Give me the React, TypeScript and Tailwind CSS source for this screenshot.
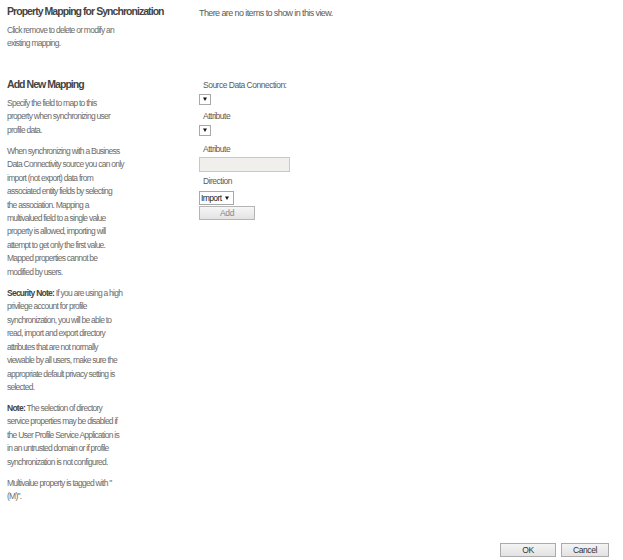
const INTRO = ["Specify the field to map to this", "property when synchronizing user", "profile data."];

const BDC = [
  "When synchronizing with a Business",
  "Data Connectivity source you can only",
  "import (not export) data from",
  "associated entity fields by selecting",
  "the association. Mapping a",
  "multivalued field to a single value",
  "property is allowed, importing will",
  "attempt to get only the first value.",
  "Mapped properties cannot be",
  "modified by users.",
];

const SECURITY = [
  "If you are using a high",
  "privilege account for profile",
  "synchronization, you will be able to",
  "read, import and export directory",
  "attributes that are not normally",
  "viewable by all users, make sure the",
  "appropriate default privacy setting is",
  "selected.",
];

const NOTE = [
  "The selection of directory",
  "service properties may be disabled if",
  "the User Profile Service Application is",
  "in an untrusted domain or if profile",
  "synchronization is not configured.",
];

const MULTI = ['Multivalue property is tagged with "', '(M)".'];

const Arrow = () => (
  <svg width="4" height="4" viewBox="0 0 4 4" className="block">
    <path d="M0 0.5h4L2 4z" fill="#111" />
  </svg>
);

const Lines = ({ lines, lead }: { lines: string[]; lead?: string }) => (
  <div className="mb-[7.5px]">
    {lines.map((l, i) => (
      <div key={i} className="whitespace-nowrap">
        {i === 0 && lead && <span className="font-bold text-[#444]">{lead} </span>}
        {l}
      </div>
    ))}
  </div>
);

const Label = ({ children, className = "" }: { children: React.ReactNode; className?: string }) => (
  <div className={`pl-[4px] h-[13px] leading-[13px] text-[8.5px] tracking-[-0.5px] text-[#5a5a5a] whitespace-nowrap ${className}`}>
    {children}
  </div>
);

const SmallSelect = () => (
  <div className="w-[12px] h-[11px] border border-[#a8a8a8] bg-white flex items-center justify-center">
    <Arrow />
  </div>
);

export default function App() {
  return (
    <div className="w-[623px] h-[560px] bg-white flex flex-col font-['Liberation_Sans',Arial,sans-serif]">
      {/* Property mapping */}
      <div className="flex pt-[4px]">
        <div className="w-[199px] pl-[7px] shrink-0">
          <h2 className="text-[10.5px] leading-[14px] font-bold tracking-[-0.95px] text-[#444] whitespace-nowrap">
            Property Mapping for Synchronization
          </h2>
          <div className="mt-[6px] text-[8.5px] leading-[13.45px] tracking-[-0.75px] text-[#6b6b6b]">
            <div>Click remove to delete or modify an</div>
            <div>existing mapping.</div>
          </div>
        </div>
        <div className="pt-[2px] text-[9px] leading-[14px] tracking-[-0.6px] text-[#5a5a5a] whitespace-nowrap">
          There are no items to show in this view.
        </div>
      </div>

      {/* Add new mapping */}
      <div className="flex mt-[26px]">
        <div className="w-[199px] pl-[7px] shrink-0">
          <h2 className="text-[10.5px] leading-[14px] font-bold tracking-[-0.95px] text-[#444] whitespace-nowrap">
            Add New Mapping
          </h2>
          <div className="mt-[6px] text-[8.5px] leading-[13.45px] tracking-[-0.75px] text-[#6b6b6b]">
            <Lines lines={INTRO} />
            <Lines lines={BDC} />
            <Lines lines={SECURITY} lead="Security Note:" />
            <Lines lines={NOTE} lead="Note:" />
            <Lines lines={MULTI} />
          </div>
        </div>

        <div className="pt-[2.5px] flex flex-col items-start">
          <Label>Source Data Connection:</Label>
          <div className="mt-[1.5px]">
            <SmallSelect />
          </div>
          <Label className="mt-[5.5px]">Attribute</Label>
          <div className="mt-[1.5px]">
            <SmallSelect />
          </div>
          <Label className="mt-[7.5px]">Attribute</Label>
          <div className="mt-[0.5px] w-[91px] h-[15px] border border-[#c9c9c5] bg-[#f0efeb]" />
          <Label className="mt-[3.5px]">Direction</Label>
          <div className="mt-[2.5px] w-[35px] h-[14px] border border-[#a8a8a8] bg-white flex items-center pl-[1px] gap-[3px]">
            <span className="text-[8.5px] leading-[12px] tracking-[-0.6px] text-[#222]">Import</span>
            <Arrow />
          </div>
          <button className="mt-[1px] w-[56px] h-[14px] border border-[#b5b5b5] bg-gradient-to-b from-[#f6f6f6] to-[#e3e3e3] text-[8.5px] leading-[12px] tracking-[-0.4px] text-[#888]">
            Add
          </button>
        </div>
      </div>

      {/* Footer buttons */}
      <div className="mt-auto flex justify-end gap-[5px] pr-[14px] pb-[3px]">
        <button className="w-[56px] h-[14px] border border-[#ababab] bg-gradient-to-b from-[#f4f4f4] to-[#e2e2e2] text-[8.5px] leading-[12px] tracking-[-0.4px] text-[#333]">
          OK
        </button>
        <button className="w-[48px] h-[14px] border border-[#ababab] bg-gradient-to-b from-[#f4f4f4] to-[#e2e2e2] text-[8.5px] leading-[12px] tracking-[-0.4px] text-[#333]">
          Cancel
        </button>
      </div>
    </div>
  );
}
